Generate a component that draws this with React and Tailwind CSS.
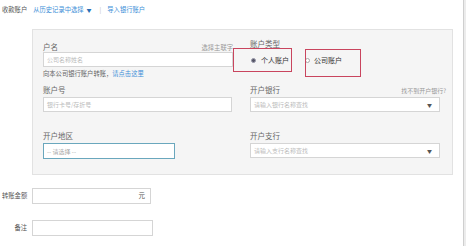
export default function App() {
  const font = { fontFamily: '"Noto Sans CJK SC", "Noto Sans", sans-serif' };
  return (
    <div className="flex w-[466px] h-[246px] bg-white text-[#666]" style={font}>
      <div className="relative flex-1">
        <div className="flex items-center h-[20px] pl-[2px] text-[6.3px] leading-[8px]">
          <span className="text-[#555]">收款账户</span>
          <span className="ml-[6px] text-[#3d8fd8]">从历史记录中选择</span>
          <span className="ml-[3px] text-[5px] text-[#2a6fb5]">▼</span>
          <span className="ml-[8px] text-[#bbb]">|</span>
          <span className="ml-[6px] text-[#3d8fd8]">导入银行账户</span>
        </div>

        <div className="ml-[32px] mt-[9px] w-[421px] bg-[#f5f5f5] border border-[#e2e2e2] pl-[10px] pt-[12px] pb-[15px] grid grid-cols-[207px_1fr]">
          {/* left column */}
          <div className="flex flex-col">
            <div className="w-[190px] flex justify-between items-end h-[10px]">
              <span className="text-[7.5px] leading-[10px]">户名</span>
              <span className="text-[6.3px] leading-[8px] text-[#999]">选择主联字</span>
            </div>
            <div className="w-[190px] h-[15px] bg-white border border-[#d5d5d5] flex items-center px-[3px] text-[6px] text-[#bbb]">
              公司名称姓名
            </div>
            <div className="mt-[3px] text-[6.3px] leading-[8px] text-[#666]">
              向本公司银行账户转账，<span className="text-[#3d8fd8]">请点击这里</span>
            </div>
            <div className="mt-[7px] text-[7.5px] leading-[10px]">账户号</div>
            <div className="mt-[2px] w-[189px] h-[15px] bg-white border border-[#d5d5d5] flex items-center px-[3px] text-[6px] text-[#bbb]">
              银行卡号/存折号
            </div>
            <div className="mt-[19px] text-[7.5px] leading-[10px]">开户地区</div>
            <div className="mt-[2px] w-[132px] h-[16px] bg-white border-[1.5px] border-[#6aa7bd] flex items-center px-[3px] text-[6px] text-[#aaa]">
              -- 请选择 --
            </div>
          </div>

          {/* right column */}
          <div className="flex flex-col -mt-[3px]">
            <div className="text-[7.5px] leading-[10px]">账户类型</div>
            <div className="mt-[6px] h-[10px] flex items-center text-[7px]">
              <span className="ml-[1px] w-[5px] h-[5px] rounded-full bg-[#556] border border-[#99a]" />
              <span className="ml-[5px] text-[#333]">个人账户</span>
              <span className="ml-[16px] w-[5px] h-[5px] rounded-full bg-white border border-[#aaa]" />
              <span className="ml-[4px] text-[#333]">公司账户</span>
            </div>
            <div className="mt-[20px] w-[196px] flex justify-between items-end h-[10px]">
              <span className="text-[7.5px] leading-[10px]">开户银行</span>
              <span className="text-[6px] leading-[8px] text-[#999]">找不到开户银行?</span>
            </div>
            <div className="mt-[2px] w-[190px] h-[15px] bg-white border border-[#d5d5d5] flex items-center justify-between px-[3px] text-[6px] text-[#bbb]">
              <span>请输入银行名称查找</span>
              <span className="text-[5px] text-[#555] mr-[4px]">▼</span>
            </div>
            <div className="mt-[19px] text-[7.5px] leading-[10px]">开户支行</div>
            <div className="mt-[2px] w-[190px] h-[15px] bg-white border border-[#d5d5d5] flex items-center justify-between px-[3px] text-[6px] text-[#bbb]">
              <span>请输入支行名称查找</span>
              <span className="text-[5px] text-[#555] mr-[4px]">▼</span>
            </div>
          </div>
        </div>

        <div className="mt-[13px] flex items-center">
          <span className="w-[32px] pl-[2px] text-[6.3px] text-[#555]">转账金额</span>
          <div className="w-[119px] h-[16px] bg-white border border-[#d5d5d5] flex items-center justify-end pr-[5px] text-[6.5px] text-[#555]">
            元
          </div>
        </div>
        <div className="mt-[16px] flex items-center">
          <span className="w-[32px] pr-[5px] text-right text-[6.3px] text-[#555]">备注</span>
          <div className="w-[121px] h-[16px] bg-white border border-[#d5d5d5]" />
        </div>

        {/* annotation boxes */}
        <div className="absolute left-[233px] top-[48px] w-[59px] h-[24px] border border-[#c9455e]" />
        <div className="absolute left-[305px] top-[49px] w-[56px] h-[28px] border border-[#c9455e]" />
      </div>
      <div className="w-[3px] h-full bg-[#ececec] border-l border-[#cfcfcf]" />
    </div>
  );
}
